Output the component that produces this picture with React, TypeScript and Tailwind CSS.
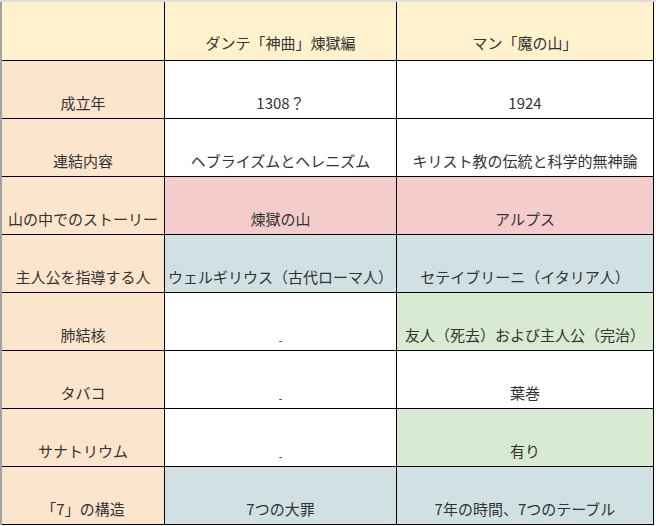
import React from "react";

type Cell = { t: string; bg: string; dash?: boolean };

const Y = "bg-[#fff2cc]";
const O = "bg-[#fce5cd]";
const W = "bg-white";
const P = "bg-[#f4cccc]";
const B = "bg-[#d0e0e3]";
const G = "bg-[#d9ead3]";

const rows: Cell[][] = [
  [
    { t: "", bg: Y },
    { t: "ダンテ「神曲」煉獄編", bg: Y },
    { t: "マン「魔の山」", bg: Y },
  ],
  [
    { t: "成立年", bg: O },
    { t: "1308？", bg: W },
    { t: "1924", bg: W },
  ],
  [
    { t: "連結内容", bg: O },
    { t: "ヘブライズムとヘレニズム", bg: W },
    { t: "キリスト教の伝統と科学的無神論", bg: W },
  ],
  [
    { t: "山の中でのストーリー", bg: O },
    { t: "煉獄の山", bg: P },
    { t: "アルプス", bg: P },
  ],
  [
    { t: "主人公を指導する人", bg: O },
    { t: "ウェルギリウス（古代ローマ人）", bg: B },
    { t: "セテイブリーニ（イタリア人）", bg: B },
  ],
  [
    { t: "肺結核", bg: O },
    { t: "-", bg: W, dash: true },
    { t: "友人（死去）および主人公（完治）", bg: G },
  ],
  [
    { t: "タバコ", bg: O },
    { t: "-", bg: W, dash: true },
    { t: "葉巻", bg: W },
  ],
  [
    { t: "サナトリウム", bg: O },
    { t: "-", bg: W, dash: true },
    { t: "有り", bg: G },
  ],
  [
    { t: "「7」の構造", bg: O },
    { t: "7つの大罪", bg: B },
    { t: "7年の時間、7つのテーブル", bg: B },
  ],
];

export default function App() {
  return (
    <div
      className="w-[656px] h-[526px] bg-white flex flex-col text-[#333]"
      style={{ fontFamily: '"Noto Sans CJK JP", "Noto Sans", sans-serif' }}
    >
      <div className="h-[2px] bg-[#dcdcdc] shrink-0" />
      <div className="flex">
        <div className="w-[2px] bg-[#a3a3a3] shrink-0" />
        <div className="grid grid-cols-[163px_232px_257px] grid-rows-[59px_repeat(8,58px)]">
          {rows.map((r, ri) =>
            r.map((c, ci) => (
              <div
                key={ri + "-" + ci}
                className={`${c.bg} border-r border-b border-black flex items-end justify-center whitespace-nowrap overflow-hidden ${
                  ri === 0 ? "pb-[7px]" : "pb-[5px]"
                }`}
              >
                {c.dash ? (
                  <span className="text-[10px] leading-none text-black">-</span>
                ) : (
                  <span className="text-[15px] leading-[20px]">{c.t}</span>
                )}
              </div>
            ))
          )}
        </div>
      </div>
    </div>
  );
}
